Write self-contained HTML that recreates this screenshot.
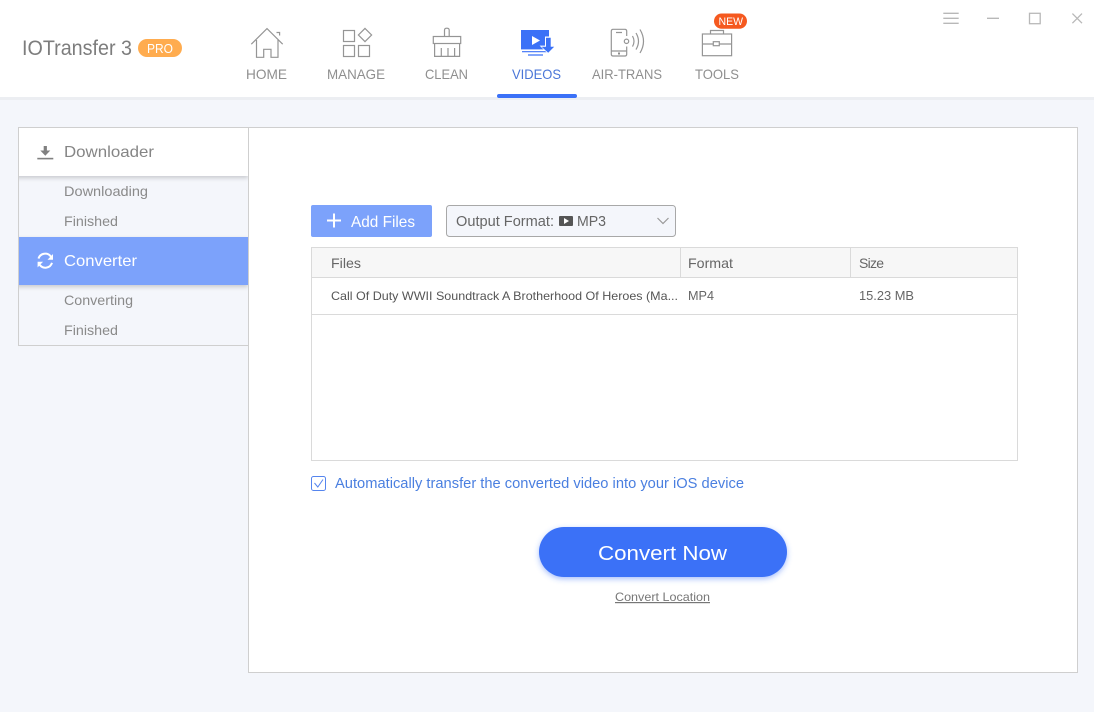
<!DOCTYPE html>
<html>
<head>
<meta charset="utf-8">
<style>
html,body{margin:0;padding:0;width:1094px;height:712px;overflow:hidden;background:#f4f6fb}
svg{display:block}
text{font-family:"Liberation Sans",sans-serif}
.i{fill:none;stroke:#959595;stroke-width:1.2}
.w{fill:none;stroke:#b8b8b8;stroke-width:1.3}
</style>
</head>
<body>
<svg width="1094" height="712" viewBox="0 0 1094 712" xmlns="http://www.w3.org/2000/svg">
<defs>
<filter id="s1" x="-5%" y="-30%" width="110%" height="170%"><feDropShadow dx="0" dy="2" stdDeviation="2" flood-color="#000" flood-opacity=".18"/></filter>
<filter id="s2" x="-10%" y="-30%" width="120%" height="170%"><feDropShadow dx="0" dy="2" stdDeviation="3" flood-color="#3b71f7" flood-opacity=".45"/></filter>
<clipPath id="side"><rect x="19" y="128" width="229" height="217"/></clipPath>
</defs>
<rect width="1094" height="712" fill="#f4f6fb"/>
<!-- header -->
<rect x="0" y="97" width="1094" height="3" fill="#eceef2"/>
<rect width="1094" height="97" fill="#fff"/>
<text x="22" y="55" font-size="21" fill="#7d7d7d" textLength="110" lengthAdjust="spacingAndGlyphs">IOTransfer 3</text>
<rect x="138" y="39" width="44" height="18" rx="9" fill="#ffac4f"/>
<text x="147" y="53" font-size="13" fill="#fff" textLength="26" lengthAdjust="spacingAndGlyphs">PRO</text>

<!-- home -->
<path class="i" d="M251.3 44.2 267 28.6 282.7 44.2M256.5 40V57.3H263.7V49.3H271V57.3H278V40M276.5 32.5H279.6V35.5"/>
<!-- manage -->
<g class="i"><rect x="343.5" y="30.5" width="11" height="11"/><rect x="343.5" y="45.5" width="11" height="11"/><rect x="358.5" y="45.5" width="11" height="11"/><path d="M365 28.4 371.6 35 365 41.6 358.4 35Z"/></g>
<!-- clean -->
<g class="i"><path d="M444.5 36.5V30.2Q444.5 28.2 446.8 28.2 449.2 28.2 449.2 30.2V36.5"/><rect x="433.3" y="36.5" width="27.4" height="7"/><path d="M434.6 43.5V56.4H459.6V43.5M441.3 48V56.4M448 48V56.4M454.6 48V56.4"/></g>
<!-- videos -->
<rect x="521" y="30" width="28" height="19.4" fill="#3b71f7"/>
<path d="M532 36V45L540 40.5Z" fill="#fff"/>
<path d="M522 51.7H547M528 55H543" stroke="#3b71f7" stroke-width="1.2" fill="none"/>
<path d="M545 36.5H551.8V45.6H556.5L548.2 54 539.6 45.6H545Z" fill="#fff"/>
<path d="M546 37.8H550.7V46.7H554.2L548.2 52.7 541.5 46.7H546Z" fill="#3b71f7"/>
<text x="512" y="79" font-size="14" fill="#4a76d8" textLength="49" lengthAdjust="spacingAndGlyphs">VIDEOS</text>
<rect x="497" y="94" width="80" height="4" rx="2" fill="#3b71f7"/>
<!-- air trans -->
<g class="i"><path d="M626.7 36V31A1.8 1.8 0 0 0 625 29.3H613A1.8 1.8 0 0 0 611.3 31V54.3A1.8 1.8 0 0 0 613 56H625A1.8 1.8 0 0 0 626.7 54.3V46.5M611.3 51H626.7M616 32.5H622"/><circle cx="626.5" cy="41.3" r="2.2"/><path d="M632.5 36Q635.5 41.3 632.5 46.6M636 33Q641 41.3 636 49.6M640 29.5Q647 41.3 640 53"/></g>
<rect x="618" y="52.5" width="2" height="2" fill="#8c8c8c"/>
<!-- tools -->
<g class="i"><rect x="702.4" y="34" width="29.2" height="21.7"/><path d="M710.5 34V30.5H723.5V34M702.4 44H713.3M719.3 44H731.6"/><rect x="713.3" y="41.7" width="6" height="4"/></g>
<rect x="714" y="13.5" width="33" height="15.2" rx="7.6" fill="#f5591f"/>
<text x="718.5" y="25" font-size="11" fill="#fff" textLength="24.5" lengthAdjust="spacingAndGlyphs">NEW</text>

<g font-size="14" fill="#8f8f8f">
<text x="246" y="79" textLength="41" lengthAdjust="spacingAndGlyphs">HOME</text>
<text x="327" y="79" textLength="58" lengthAdjust="spacingAndGlyphs">MANAGE</text>
<text x="425" y="79" textLength="43" lengthAdjust="spacingAndGlyphs">CLEAN</text>
<text x="592" y="79" textLength="70" lengthAdjust="spacingAndGlyphs">AIR-TRANS</text>
<text x="695" y="79" textLength="44" lengthAdjust="spacingAndGlyphs">TOOLS</text>
</g>
<!-- window controls -->
<path class="w" d="M943.3 13.3H958.7M943.3 18.3H958.7M943.3 23.3H958.7M987 18.3H999M1072.4 13.6 1082 23.2M1082 13.6 1072.4 23.2"/>
<rect class="w" x="1029.5" y="13.3" width="10.7" height="10.4"/>

<!-- main panel -->
<rect x="248.5" y="127.5" width="829" height="545" fill="#fff" stroke="#cfcfcf"/>
<!-- sidebar -->
<rect x="18.5" y="127.5" width="230" height="218" fill="#f4f6fb" stroke="#cfcfcf"/>
<g clip-path="url(#side)">
<rect x="10" y="128" width="238" height="48" fill="#fff" filter="url(#s1)"/>
<rect x="10" y="237" width="238" height="48" fill="#7ca2fb" filter="url(#s1)"/>
</g>
<path d="M43.7 146H46.9V150.5H50.3L45.3 155.8 40.3 150.5H43.7Z" fill="#808080"/>
<rect x="37.3" y="157.8" width="16" height="1.6" fill="#808080"/>
<path d="M38.5 258.6A7 7 0 0 1 51 256.7M52 262.8A7 7 0 0 1 39.6 264.7" fill="none" stroke="#fff" stroke-width="2"/>
<path d="M53 254V259.7H47.5ZM37.6 267.4V261.7H43.1Z" fill="#fff"/>
<text x="64" y="157" font-size="16" fill="#858585" textLength="90" lengthAdjust="spacingAndGlyphs">Downloader</text>
<text x="64" y="266" font-size="16" fill="#fff" textLength="73" lengthAdjust="spacingAndGlyphs">Converter</text>
<g font-size="14" fill="#8a8a8a">
<text x="64" y="196" textLength="84" lengthAdjust="spacingAndGlyphs">Downloading</text>
<text x="64" y="226" textLength="54" lengthAdjust="spacingAndGlyphs">Finished</text>
<text x="64" y="305" textLength="69" lengthAdjust="spacingAndGlyphs">Converting</text>
<text x="64" y="335" textLength="54" lengthAdjust="spacingAndGlyphs">Finished</text>
</g>

<!-- toolbar -->
<rect x="311" y="205" width="121" height="32" rx="2" fill="#7ca2fb"/>
<path d="M327 220.5H341M334 213.5V227.5" stroke="#fff" stroke-width="2" fill="none"/>
<text x="351" y="227" font-size="16" fill="#fff" textLength="64" lengthAdjust="spacingAndGlyphs">Add Files</text>
<rect x="446.5" y="205.5" width="229" height="31" rx="3" fill="#f4f6fb" stroke="#a8a8a8"/>
<text x="456" y="226" font-size="14.5" fill="#666" textLength="98" lengthAdjust="spacingAndGlyphs">Output Format:</text>
<rect x="559" y="216" width="14" height="10" rx="1" fill="#555"/>
<path d="M564 218V224L569 221Z" fill="#fff"/>
<text x="577" y="226" font-size="14.5" fill="#666" textLength="29" lengthAdjust="spacingAndGlyphs">MP3</text>
<path d="M657.5 218 663 223.5 668.5 218" fill="none" stroke="#999" stroke-width="1.2"/>

<!-- table -->
<rect x="311.5" y="247.5" width="706" height="213" fill="#fff" stroke="#dadada"/>
<rect x="312" y="248" width="705" height="29" fill="#f7f7f7"/>
<path d="M312 277.5H1017M312 314.5H1017M680.5 248V277M850.5 248V277" stroke="#dadada" fill="none"/>
<g font-size="14" fill="#666">
<text x="331" y="268" textLength="30" lengthAdjust="spacingAndGlyphs">Files</text>
<text x="688" y="268" textLength="45" lengthAdjust="spacingAndGlyphs">Format</text>
<text x="859" y="268" textLength="25">Size</text>
</g>
<text x="331" y="300" font-size="12" fill="#555" textLength="347" lengthAdjust="spacingAndGlyphs">Call Of Duty WWII Soundtrack A Brotherhood Of Heroes (Ma...</text>
<text x="688" y="300" font-size="12.5" fill="#666" textLength="26" lengthAdjust="spacingAndGlyphs">MP4</text>
<text x="859" y="300" font-size="12.5" fill="#666" textLength="55" lengthAdjust="spacingAndGlyphs">15.23 MB</text>

<!-- checkbox -->
<rect x="311.5" y="476.5" width="14" height="14" rx="2" fill="none" stroke="#5585ee"/>
<path d="M314.5 483 317.800 487 323 479.5" fill="none" stroke="#5585ee" stroke-width="1"/>
<text x="335" y="488" font-size="14.5" fill="#4a7fe0" textLength="409" lengthAdjust="spacingAndGlyphs">Automatically transfer the converted video into your iOS device</text>

<!-- convert -->
<rect x="539" y="527" width="248" height="50" rx="25" fill="#3b71f7" filter="url(#s2)"/>
<text x="598" y="560" font-size="20" fill="#fff" textLength="129" lengthAdjust="spacingAndGlyphs">Convert Now</text>
<text x="615" y="601" font-size="12" fill="#777" text-decoration="underline" textLength="95" lengthAdjust="spacingAndGlyphs">Convert Location</text>
</svg>
</body>
</html>
